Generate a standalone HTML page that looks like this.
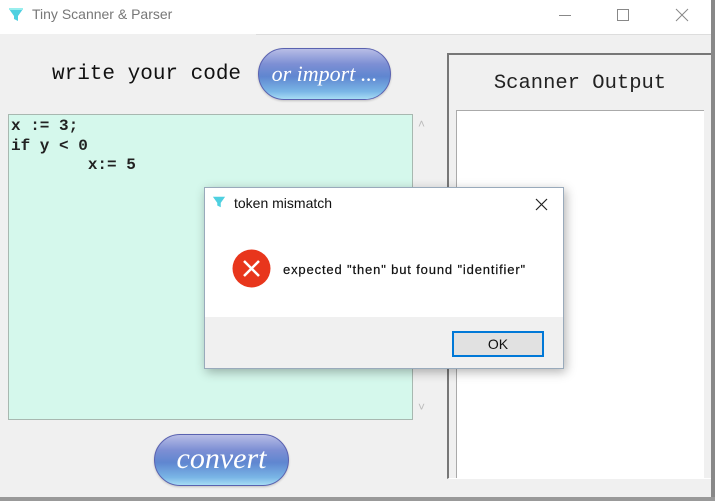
<!DOCTYPE html>
<html><head><meta charset="utf-8"><style>
*{margin:0;padding:0;box-sizing:border-box}
body{width:715px;height:501px;background:#f0f0f0;position:relative;overflow:hidden;font-family:"Liberation Sans",sans-serif}
.abs{position:absolute}
.mono{font-family:"Liberation Mono",monospace}
.btn{position:absolute;border-radius:26px;background:linear-gradient(#b8bde6 0%,#7d8fd4 30%,#5f86d0 55%,#7ab6e6 85%,#a6dcf4 100%);border:1px solid #5a62b0;color:#fff;font-family:"Liberation Serif",serif;font-style:italic;text-align:center;box-shadow:0 1px 2px rgba(0,0,0,.2)}
</style></head><body>
<div class="abs" style="left:0;top:0;width:715px;height:34px;background:#fff"></div>
<svg class="abs" style="left:8px;top:7px" width="16" height="16" viewBox="0 0 16 16"><path d="M1 2h14l-5 7v5l-4-2V9z" fill="#4fd0e0"/><path d="M1 2h14" stroke="#9ee" stroke-width="2"/></svg>
<div class="abs" style="left:32px;top:6px;font-size:14px;color:#777">Tiny Scanner &amp; Parser</div>
<div class="abs" style="left:559px;top:15px;width:12px;height:1px;background:#888"></div>
<div class="abs" style="left:617px;top:9px;width:12px;height:12px;border:1px solid #888"></div>
<svg class="abs" style="left:675px;top:8px" width="14" height="14"><path d="M1 1L13 13M13 1L1 13" stroke="#888" stroke-width="1"/></svg>
<div class="abs" style="left:711px;top:0;width:4px;height:501px;background:#888"></div>
<div class="abs" style="left:0;top:497px;width:715px;height:4px;background:#999"></div>
<div class="abs" style="left:256px;top:34px;width:455px;height:1px;background:#ddd"></div>

<div class="abs mono" style="left:52px;top:63px;font-size:21px;color:#111">write your code</div>
<div class="btn" style="left:258px;top:48px;width:133px;height:52px;font-size:22px;line-height:50px">or import ...</div>

<div class="abs" style="left:8px;top:114px;width:405px;height:306px;background:#d5f8ec;border:1px solid #a8b8b0"></div>
<div class="abs mono" style="left:11px;top:117px;font-size:16px;font-weight:bold;line-height:19.5px;color:#222;white-space:pre">x := 3;
if y &lt; 0
        x:= 5</div>
<div class="abs" style="left:418px;top:117px;color:#bbb;font-size:12px">&#708;</div>
<div class="abs" style="left:418px;top:400px;color:#bbb;font-size:12px">&#709;</div>

<div class="btn" style="left:154px;top:434px;width:135px;height:52px;font-size:30px;line-height:48px">convert</div>

<div class="abs" style="left:447px;top:53px;width:264px;height:426px;border-top:2px solid #777;border-left:2px solid #777;border-bottom:1px solid #fff"></div>
<div class="abs mono" style="left:449px;top:72px;width:262px;text-align:center;font-size:20.5px;color:#222">Scanner Output</div>
<div class="abs" style="left:456px;top:110px;width:248px;height:368px;background:#fff;border-top:1px solid #aaa;border-left:1px solid #aaa"></div>

<div class="abs" style="left:204px;top:187px;width:360px;height:182px;background:#fff;border:1px solid #9ab;box-shadow:2px 3px 10px rgba(0,0,0,.3)"></div>
<div class="abs" style="left:205px;top:317px;width:358px;height:51px;background:#f0f0f0"></div>
<svg class="abs" style="left:212px;top:195px" width="14" height="14" viewBox="0 0 16 16"><path d="M1 2h14l-5 7v5l-4-2V9z" fill="#4fd0e0"/></svg>
<div class="abs" style="left:234px;top:195px;font-size:14px;color:#111">token mismatch</div>
<svg class="abs" style="left:535px;top:198px" width="13" height="13"><path d="M1 1L12 12M12 1L1 12" stroke="#222" stroke-width="1.2"/></svg>
<svg class="abs" style="left:232px;top:249px" width="39" height="39"><circle cx="19.5" cy="19.5" r="19" fill="#e8361c"/><path d="M12 12L27 27M27 12L12 27" stroke="#fff" stroke-width="2.5"/></svg>
<div class="abs" style="left:283px;top:262px;font-size:13px;letter-spacing:0.85px;color:#111;-webkit-text-stroke:0.2px #111">expected "then" but found "identifier"</div>
<div class="abs" style="left:452px;top:331px;width:92px;height:26px;border:2px solid #0078d7;background:#e1e1e1;text-align:center;font-size:14px;line-height:22px;color:#111">OK</div>
</body></html>
